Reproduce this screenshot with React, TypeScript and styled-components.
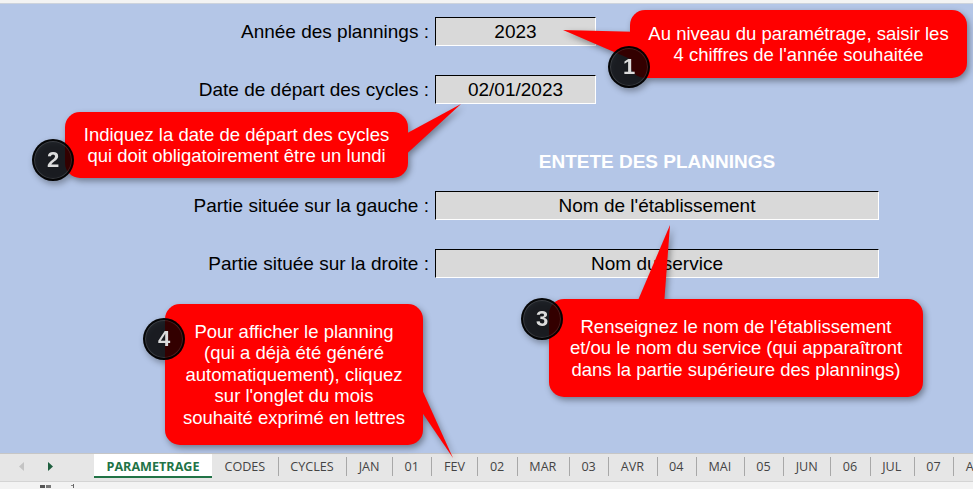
import React from "react";
import styled, { createGlobalStyle } from "styled-components";

const GlobalStyle = createGlobalStyle`
  html, body {
    margin: 0;
    padding: 0;
    width: 973px;
    height: 489px;
    overflow: hidden;
    background: #b4c6e7;
  }
  body {
    font-family: "Liberation Sans", Arial, sans-serif;
  }
`;

const Page = styled.div`
  width: 973px;
  height: 489px;
  display: flex;
  flex-direction: column;
`;

const TopStrip = styled.div`
  height: 3px;
  flex-shrink: 0;
  background: #f3f3f3;
  border-bottom: 1px solid #cdd3dc;
`;

const Sheet = styled.div`
  flex: 1;
  position: relative;
  z-index: 1;
  background: #b4c6e7;
`;

const Form = styled.div`
  display: flex;
  flex-direction: column;
  padding-top: 13px;
`;

const Row = styled.div<{ $gap: number }>`
  display: flex;
  align-items: center;
  height: 29px;
  margin-top: ${(p) => p.$gap}px;
`;

const Label = styled.div`
  width: 430px;
  box-sizing: border-box;
  padding-right: 1px;
  text-align: right;
  font-size: 19px;
  color: #000;
  white-space: nowrap;
`;

const Field = styled.div<{ $w: number }>`
  margin-left: 5px;
  width: ${(p) => p.$w}px;
  height: 29px;
  box-sizing: border-box;
  border-top: 1px solid #000;
  border-left: 1px solid #000;
  border-right: 1px solid #fff;
  border-bottom: 1px solid #fff;
  background: #d9d9d9;
  display: flex;
  align-items: center;
  justify-content: center;
  font-size: 19px;
  color: #000;
  padding-top: 1px;
  white-space: nowrap;
`;

const Heading = styled.div`
  margin-top: 43px;
  margin-left: 435px;
  width: 444px;
  height: 29px;
  line-height: 29px;
  text-align: center;
  font-size: 19px;
  font-weight: bold;
  color: #fff;
`;

const Callout = styled.div<{ $x: number; $y: number; $w: number; $h: number }>`
  position: absolute;
  left: ${(p) => p.$x}px;
  top: ${(p) => p.$y}px;
  width: ${(p) => p.$w}px;
  height: ${(p) => p.$h}px;
  filter: drop-shadow(2px 3px 3px rgba(0, 0, 0, 0.38));
`;

const Pointer = styled.svg`
  position: absolute;
  left: 0;
  top: 0;
  width: 1px;
  height: 1px;
  overflow: visible;
`;

const Bubble = styled.div`
  position: absolute;
  inset: 0;
  background: #ff0000;
  border-radius: 15px;
  color: #fff;
  font-size: 18.5px;
  line-height: 21.5px;
  text-align: center;
  display: flex;
  flex-direction: column;
  align-items: center;
  justify-content: center;
  white-space: nowrap;
`;

const Badge = styled.div<{ $x: number; $y: number }>`
  position: absolute;
  left: ${(p) => p.$x}px;
  top: ${(p) => p.$y}px;
  width: 42px;
  height: 42px;
  box-sizing: border-box;
  border-radius: 50%;
  background: rgba(0, 0, 0, 0.8);
  border: 2px solid rgba(0, 0, 0, 0.85);
  box-shadow: inset 0 0 0 1px rgba(255, 255, 255, 0.12);
  color: #dcdcdc;
  font-size: 22px;
  font-weight: bold;
  display: flex;
  align-items: center;
  justify-content: center;
`;

const TabBar = styled.div`
  height: 28px;
  flex-shrink: 0;
  box-sizing: border-box;
  border-top: 1px solid #c6c6c6;
  background: #e6e6e6;
  display: flex;
  align-items: flex-start;
  overflow: hidden;
`;

const Nav = styled.div`
  width: 94px;
  height: 24px;
  flex-shrink: 0;
  position: relative;
`;

const Arrow = styled.svg<{ $x: number }>`
  position: absolute;
  left: ${(p) => p.$x}px;
  top: 8px;
`;

const Tab = styled.div<{ $active?: boolean; $sep?: boolean }>`
  height: 24px;
  flex-shrink: 0;
  box-sizing: border-box;
  padding: 2px 12.5px 0;
  display: flex;
  align-items: center;
  position: relative;
  font-family: "Open Sans", "Noto Sans", sans-serif;
  font-size: 12.6px;
  white-space: nowrap;
  color: ${(p) => (p.$active ? "#217346" : "#444")};
  font-weight: ${(p) => (p.$active ? 700 : 400)};
  background: ${(p) => (p.$active ? "#fff" : "transparent")};
  border-bottom: 2px solid ${(p) => (p.$active ? "#217346" : "transparent")};
  &::before {
    content: "";
    display: ${(p) => (p.$sep ? "block" : "none")};
    position: absolute;
    left: 0;
    top: 3px;
    bottom: 0px;
    width: 1px;
    background: #a8a8a8;
  }
`;

const StatusStrip = styled.div`
  height: 7px;
  flex-shrink: 0;
  background: #f3f3f3;
  border-top: 1px solid #d4d4d4;
  position: relative;
`;

const StatusMarks = styled.svg`
  position: absolute;
  left: 38px;
  top: 2px;
`;

const tabs = [
  "CODES", "CYCLES", "JAN", "01", "FEV", "02", "MAR", "03", "AVR",
  "04", "MAI", "05", "JUN", "06", "JUL", "07", "AOU",
];

type CalloutData = {
  x: number; y: number; w: number; h: number;
  points: string; badge: [number, number]; num: string; lines: string[];
};

const callouts: CalloutData[] = [
  {
    x: 630, y: 6, w: 337, h: 68,
    points: "-67,20 12,22 12,54",
    badge: [-22, 36], num: "1",
    lines: ["Au niveau du paramétrage, saisir les", "4 chiffres de l'année souhaitée"],
  },
  {
    x: 65, y: 108, w: 343, h: 66,
    points: "396,-8 335,25 335,48",
    badge: [-33, 27], num: "2",
    lines: ["Indiquez la date de départ des cycles", "qui doit obligatoirement être un lundi"],
  },
  {
    x: 549, y: 295, w: 374, h: 98,
    points: "121,-74 87,6 115,6",
    badge: [-28, -1], num: "3",
    lines: [
      "Renseignez le nom de l'établissement",
      "et/ou le nom du service (qui apparaîtront",
      "dans la partie supérieure des plannings)",
    ],
  },
  {
    x: 165, y: 300, w: 258, h: 141,
    points: "288,154 250,70 250,98",
    badge: [-22, 14], num: "4",
    lines: [
      "Pour afficher le planning",
      "(qui a déjà été généré",
      "automatiquement), cliquez",
      "sur l'onglet du mois",
      "souhaité exprimé en lettres",
    ],
  },
];

export default function App() {
  return (
    <Page>
      <GlobalStyle />
      <TopStrip />
      <Sheet>
        <Form>
          <Row $gap={0}>
            <Label>Année des plannings :</Label>
            <Field $w={161}>2023</Field>
          </Row>
          <Row $gap={29}>
            <Label>Date de départ des cycles :</Label>
            <Field $w={161}>02/01/2023</Field>
          </Row>
          <Heading>ENTETE DES PLANNINGS</Heading>
          <Row $gap={15}>
            <Label>Partie située sur la gauche :</Label>
            <Field $w={444}>Nom de l'établissement</Field>
          </Row>
          <Row $gap={29}>
            <Label>Partie située sur la droite :</Label>
            <Field $w={444}>Nom du service</Field>
          </Row>
        </Form>
        {callouts.map((c) => (
          <Callout key={c.num} $x={c.x} $y={c.y} $w={c.w} $h={c.h}>
            <Pointer>
              <polygon points={c.points} fill="#ff0000" />
            </Pointer>
            <Bubble>
              {c.lines.map((l) => (
                <div key={l}>{l}</div>
              ))}
            </Bubble>
            <Badge $x={c.badge[0]} $y={c.badge[1]}>{c.num}</Badge>
          </Callout>
        ))}
      </Sheet>
      <TabBar>
        <Nav>
          <Arrow $x={19} width="6" height="9" viewBox="0 0 6 9">
            <polygon points="5,0 0,4.5 5,9" fill="#c4c4c4" />
          </Arrow>
          <Arrow $x={48} width="6" height="9" viewBox="0 0 6 9">
            <polygon points="0,0 5,4.5 0,9" fill="#1f5f3f" />
          </Arrow>
        </Nav>
        <Tab $active>PARAMETRAGE</Tab>
        {tabs.map((t, i) => (
          <Tab key={t} $sep={i > 0}>{t}</Tab>
        ))}
      </TabBar>
      <StatusStrip>
        <StatusMarks width="45" height="5" viewBox="0 0 45 5">
          <rect x="2" y="1" width="5" height="3" fill="#555" />
          <rect x="8" y="1" width="5" height="3" fill="#777" />
          <rect x="35" y="0" width="1" height="4" fill="#666" />
          <rect x="33" y="1" width="2" height="1" fill="#888" />
        </StatusMarks>
      </StatusStrip>
    </Page>
  );
}
